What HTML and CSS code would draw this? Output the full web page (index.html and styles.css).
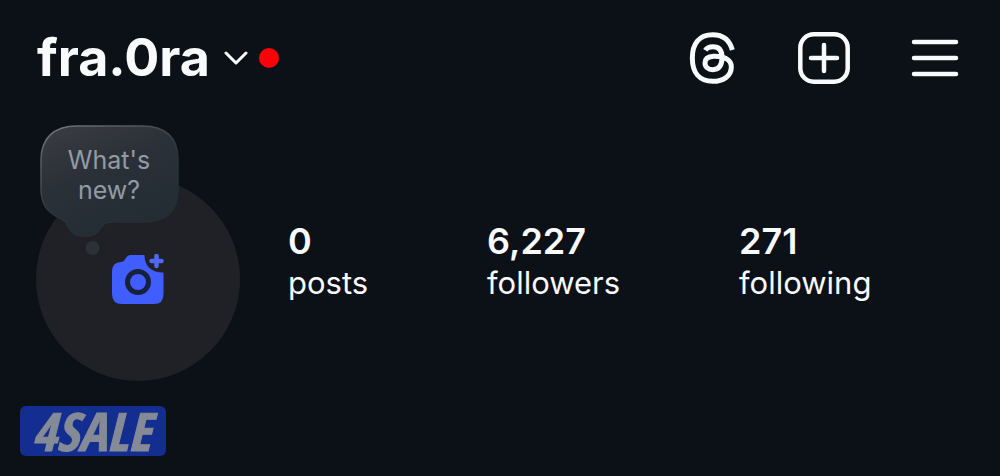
FILE: index.html
```html
<!DOCTYPE html>
<html lang="en">
<head>
<meta charset="utf-8">
<meta name="viewport" content="width=device-width, initial-scale=1">
<title>fra.0ra</title>
<link rel="stylesheet" href="styles.css">
</head>
<body>
<header class="topbar">
  <button class="account" type="button">
    <span class="username">fra.0ra</span>
    <svg class="chevron" viewBox="0 0 24 14" aria-hidden="true"><path d="M2 2l10 10L22 2"/></svg>
    <span class="alert-dot"></span>
  </button>
  <nav class="actions" aria-label="Account actions">
    <button class="icon-button" type="button" aria-label="Threads">
      <svg class="threads-icon" viewBox="48 30 150 168"><path d="M184 90C176 60 155 44 125 44C84 44 64 72 64 114C64 158 86 184 125 184C158 184 181 167 181 141C181 118 158 108 128 109C110 110 102 118 102 129C102 141 112 149 125 149C145 149 153 135 153 112C153 92 145 80 126 80C115 80 107 84 103 91"/></svg>
    </button>
    <button class="icon-button" type="button" aria-label="Create">
      <svg class="create-icon" viewBox="0 0 52 52"><rect x="2.3" y="2.3" width="47.4" height="47.4" rx="13.5"/><path d="M26 13v26M13 26h26"/></svg>
    </button>
    <button class="icon-button" type="button" aria-label="Menu">
      <svg class="menu-icon" viewBox="0 0 48 40"><path d="M3 4h42M3 20h42M3 36h42"/></svg>
    </button>
  </nav>
</header>
<main class="profile">
  <div class="avatar">
    <button class="avatar-button" type="button" aria-label="Add profile photo">
      <svg class="camera-icon" viewBox="0 0 52 50">
        <path class="camera-body" d="M19 1H32.500C32.500 11 38 18.500 51.500 18.500V40Q51.500 50 42 50H10Q0 50 0 40V18Q0 8 9 8C14 8 13 1 19 1Z"/>
        <circle class="camera-lens" cx="26" cy="28" r="10.500"/>
        <path class="camera-plus" d="M44.500 2V12M39.500 7H49.500"/>
      </svg>
    </button>
    <button class="note" type="button">
      <svg class="note-shape" viewBox="0 0 140 132" aria-hidden="true">
        <defs>
          <linearGradient id="note-fill" x1="0" y1="0" x2="0.5" y2="1"><stop offset="0" stop-color="#3b3d42"/><stop offset="0.5" stop-color="#2a3037"/><stop offset="1" stop-color="#242d34"/></linearGradient>
          <linearGradient id="note-edge" x1="0" y1="0" x2="0.6" y2="1"><stop offset="0" stop-color="#77797c"/><stop offset="0.6" stop-color="#2c343b"/><stop offset="1" stop-color="#242d34"/></linearGradient>
        </defs>
        <path fill="url(#note-fill)" stroke="url(#note-edge)" stroke-width="1.500" d="M37 1H102C127 1 138 14 138 35V64C138 86 126 97 104 97H72C65 97 63 99 60 104C57 109 52 111 44 111C35 111 30 107 27 99C26 96 23 95 20 93C7 88 1 78 1 64V35C1 14 13 1 37 1Z"/>
        <circle cx="52.500" cy="123" r="7" fill="#2a3137"/>
      </svg>
      <span class="note-text">What's<br>new?</span>
    </button>
  </div>
  <div class="stats">
    <a class="stat" href="#posts"><strong>0</strong><span>posts</span></a>
    <a class="stat" href="#followers"><strong>6,227</strong><span>followers</span></a>
    <a class="stat" href="#following"><strong>271</strong><span>following</span></a>
  </div>
</main>
<footer class="footer"><span class="sale-mark">4SALE</span></footer>
</body>
</html>
```
FILE: styles.css
```css
* { box-sizing: border-box; }
body {
  margin: 0;
  background: #0c1017;
  color: #f8fafc;
  font-family: Inter, "Liberation Sans", sans-serif;
}
button {
  padding: 0;
  border: 0;
  background: none;
  color: inherit;
  font: inherit;
  cursor: pointer;
}
svg { display: block; fill: none; }
.topbar {
  display: flex;
  align-items: center;
  justify-content: space-between;
  padding: 24px 41px 0 37px;
}
.account { display: flex; align-items: center; }
.username { font-size: 52px; font-weight: 700; line-height: 68px; }
.chevron {
  width: 24px;
  height: 14px;
  margin: 0 11px 0 14px;
  stroke: #f8fafc;
  stroke-width: 3;
  stroke-linecap: round;
  stroke-linejoin: round;
}
.alert-dot { width: 20px; height: 20px; border-radius: 50%; background: #ff000b; }
.actions { display: flex; align-items: center; gap: 61px; }
.icon-button svg { stroke: #f8fafc; stroke-linecap: round; }
.threads-icon { width: 50px; height: 56px; stroke-width: 15; }
.threads-icon path { stroke-linecap: butt; }
.create-icon { width: 52px; height: 52px; stroke-width: 4.5; }
.menu-icon { width: 48px; height: 40px; stroke-width: 4.5; }
.profile {
  display: flex;
  align-items: center;
  gap: 48px;
  padding: 85px 40px 0 36px;
}
.avatar { position: relative; flex: none; }
.avatar-button {
  display: grid;
  place-items: center;
  width: 204px;
  height: 204px;
  border-radius: 50%;
  background: #202126;
}
.camera-icon { width: 52px; height: 50px; }
.camera-body { fill: #405eff; }
.camera-lens { stroke: #17213e; stroke-width: 5; }
.camera-plus { stroke: #5069f2; stroke-width: 4.5; stroke-linecap: round; }
.note { position: absolute; top: -52px; left: 4px; width: 140px; }
.note-shape { width: 140px; height: 132px; }
.note-text {
  position: absolute;
  inset: 20px 2px auto 0;
  color: #929ba5;
  font-size: 25px;
  line-height: 30px;
  text-align: center;
}
.stats {
  display: grid;
  flex: 1;
  grid-template-columns: 199fr 252fr 221fr;
  padding-bottom: 34px;
}
.stat { display: flex; flex-direction: column; color: inherit; text-decoration: none; }
.stat strong { font-size: 36px; font-weight: 600; line-height: 42px; }
.stat span { font-size: 31px; line-height: 42px; }
.footer { padding: 25px 20px 20px; }
.sale-mark {
  display: flex;
  align-items: center;
  justify-content: center;
  width: 146px;
  height: 50px;
  padding-right: 4px;
  border-radius: 6px;
  background: #142d91;
  color: #858b96;
  font-family: "Liberation Sans Narrow", "Open Sans Condensed", Roboto, sans-serif;
  font-size: 53px;
  font-style: italic;
  font-weight: 700;
  line-height: 50px;
  -webkit-text-stroke: 1px #858b96;
}
```
